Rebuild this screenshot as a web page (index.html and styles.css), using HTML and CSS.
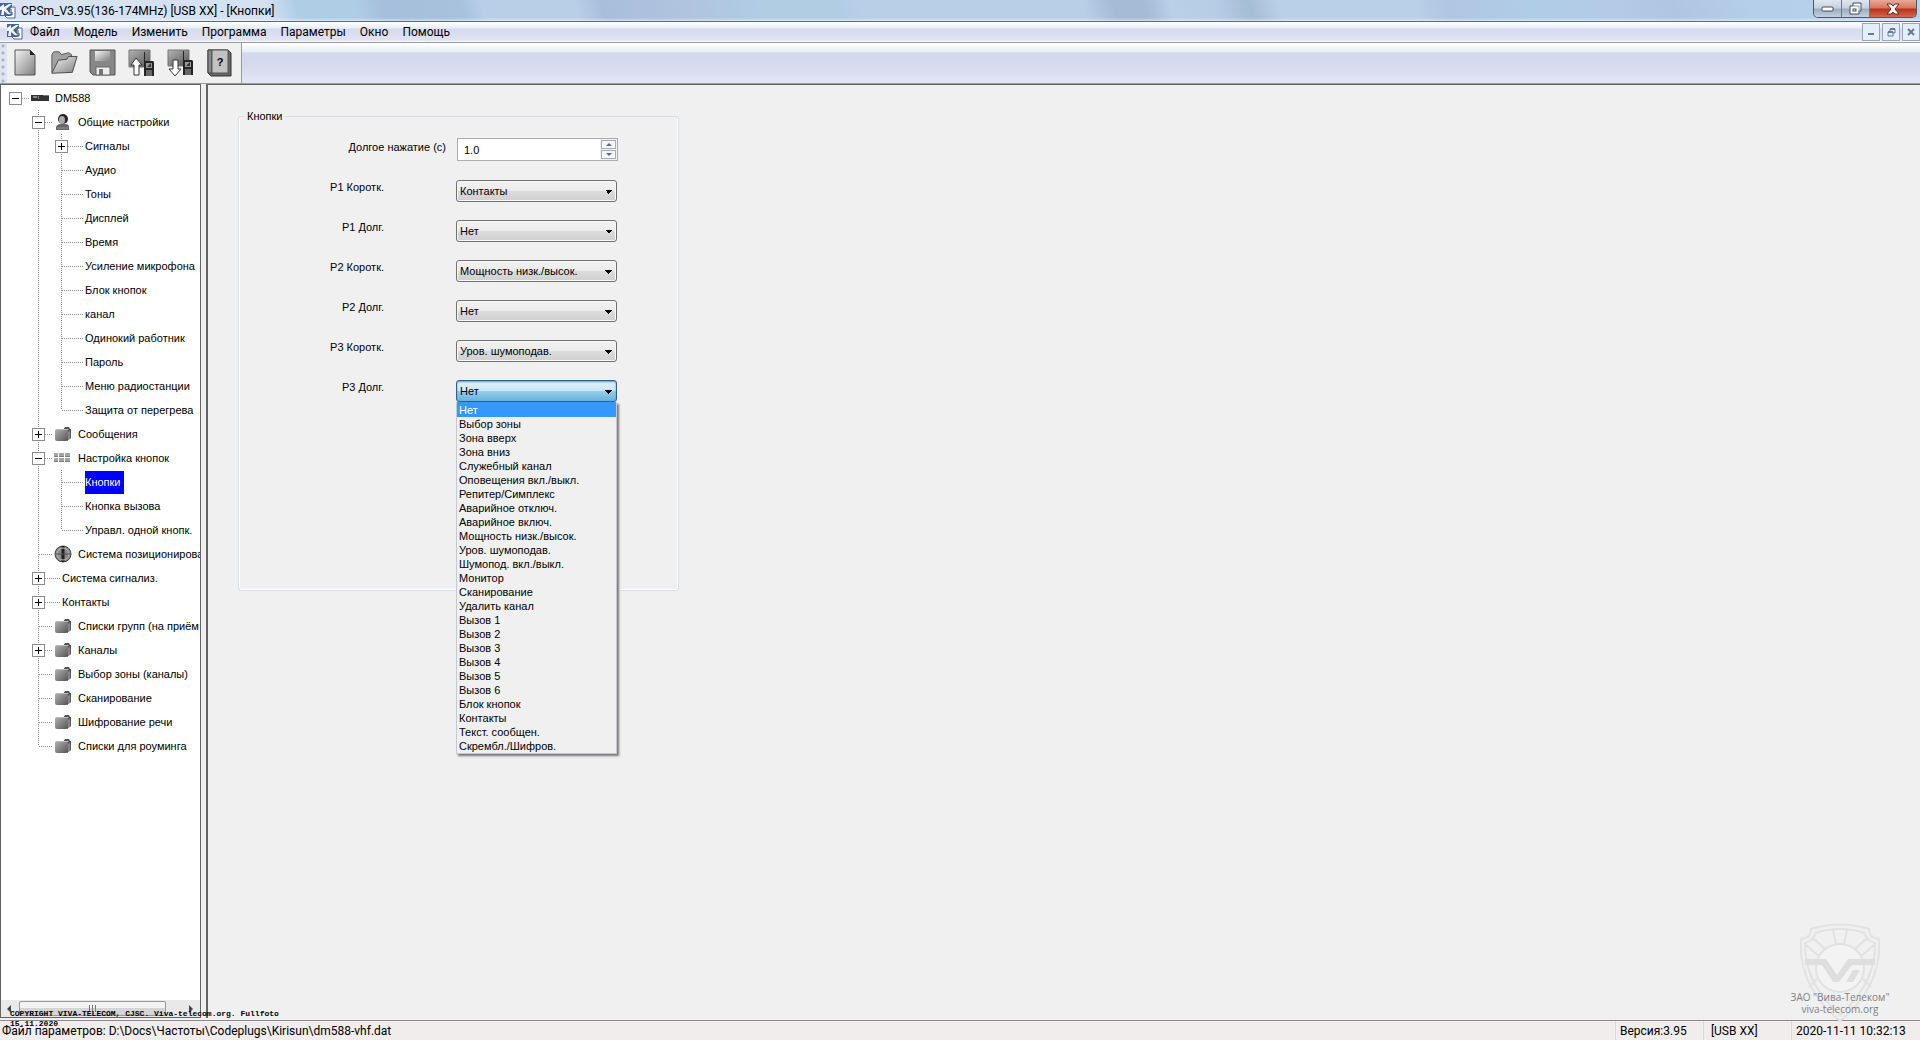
FILE: index.html
```html
<!DOCTYPE html>
<html lang="ru">
<head>
<meta charset="utf-8">
<title>CPSm_V3.95(136-174MHz) [USB XX] - [Кнопки]</title>
<link rel="stylesheet" href="styles.css">
</head>
<body>
<svg class="defs" aria-hidden="true">
  <defs>
    <linearGradient id="steel" x1="0" y1="0" x2="1" y2="1"><stop offset="0" stop-color="#f4f4f4"/><stop offset="1" stop-color="#808080"/></linearGradient>
    <linearGradient id="metal" x1="0" y1="0" x2="1" y2="1"><stop offset="0" stop-color="#b4b4b4"/><stop offset="1" stop-color="#555"/></linearGradient>
    <symbol id="logo" viewBox="0 0 16 16">
      <path d="M7 4h8v11H7l-2-2V6z" fill="#fff" stroke="#4767a8"/>
      <path d="M0 0h12v4l-3 4 3 3-2 2H0z" fill="#4a64a0"/>
      <path d="M0 4l4-3v3l5-3h3L6 6l5 5-2 1-5-4v4H1l1-5H0z" fill="#eef3fc"/>
      <path d="M12 7h-3v2h3v3H8" fill="none" stroke="#2b4685"/>
    </symbol>
    <symbol id="folder" viewBox="0 0 18 14">
      <path d="M9 3l2-3h4l1 2h1v9l-4 3V4z" fill="#555"/>
      <rect x="1" y="2" width="13" height="12" rx="2" fill="url(#metal)"/>
      <path d="M2 3h12l1-1H4z" fill="#bbb"/>
      <path d="M14 5l2-1v7l-2 2z" fill="#888"/>
    </symbol>
    <symbol id="radio" viewBox="0 0 10 25">
      <path d="M0 0h1v9h8l1 1v14H0z" fill="#242424"/>
      <path d="M2 11h6v5H2z" fill="#999"/><path d="M3 15l4-4v4z" fill="#333"/>
      <path d="M2 19h6M2 21h6M2 23h6" stroke="#aaa"/>
    </symbol>
  </defs>
</svg>

<header class="titlebar">
  <svg class="app-icon"><use href="#logo"/></svg>
  <h1 class="title">CPSm_V3.95(136-174MHz) [USB XX] - [Кнопки]</h1>
  <div class="window-buttons">
    <button class="win-button" aria-label="Свернуть"><svg width="14" height="8" viewBox="0 0 14 8"><rect x="1" y="2" width="11" height="4" rx="1" fill="#fff" stroke="#454d5a"/></svg></button>
    <button class="win-button" aria-label="Восстановить"><svg width="14" height="14" viewBox="0 0 14 14"><path d="M4 1h8v8h-2v3H1V4h3z" fill="#fff" stroke="#454d5a"/><path d="M4 4h6v6" fill="none" stroke="#8b96a5"/><rect x="4" y="7" width="3" height="2" fill="#fff" stroke="#454d5a"/></svg></button>
    <button class="win-button close" aria-label="Закрыть"><svg width="14" height="12" viewBox="0 0 14 12"><path d="M1 1h4l2 2 2-2h4L9 6l4 5H9L7 9l-2 2H1l4-5z" fill="#fff" stroke="#5a2a2a"/></svg></button>
  </div>
</header>

<nav class="menubar">
  <svg class="app-icon"><use href="#logo"/></svg>
  <button class="menu">Файл</button>
  <button class="menu">Модель</button>
  <button class="menu">Изменить</button>
  <button class="menu">Программа</button>
  <button class="menu">Параметры</button>
  <button class="menu">Окно</button>
  <button class="menu">Помощь</button>
  <div class="mdi-buttons">
    <button class="mdi" aria-label="Свернуть окно"><svg width="8" height="8"><path d="M1 6h6" stroke="#667a96" stroke-width="2"/></svg></button>
    <button class="mdi" aria-label="Восстановить окно"><svg width="9" height="9"><path d="M3 3V1h5v4H6M1 4h5v4H1z" fill="none" stroke="#667a96"/><path d="M3 1h5M1 4h5" stroke="#667a96" stroke-width="2"/></svg></button>
    <button class="mdi" aria-label="Закрыть окно"><svg width="8" height="8"><path d="M1 1l6 6M7 1L1 7" stroke="#667a96" stroke-width="2"/></svg></button>
  </div>
</nav>

<div class="toolbar">
  <div class="tools">
    <button class="tool" aria-label="Новый"><svg width="28" height="28" viewBox="0 0 28 28"><path d="M4 1h15l5 5v20H4z" fill="url(#steel)" stroke="#555"/><path d="M19 1l5 5h-5z" fill="#222"/></svg></button>
    <button class="tool" aria-label="Открыть"><svg width="28" height="28" viewBox="0 0 30 28"><path d="M2 24V5l2-3h6l2 3 8-2 3 2v8z" fill="#a2a2a2" stroke="#555"/><path d="M2 25l7-14 9-1 2-3h9l-5 17z" fill="url(#steel)" stroke="#444"/></svg></button>
    <button class="tool" aria-label="Сохранить"><svg width="28" height="28" viewBox="0 0 28 28"><path d="M1 1h25v25H4l-3-3z" fill="#878787" stroke="#555"/><path d="M6 2h15v10H6z" fill="url(#steel)"/><path d="M7 18h14v8H7z" fill="#eee" stroke="#666"/><path d="M10 20h4v6h-4z" fill="#777"/></svg></button>
    <button class="tool" aria-label="Читать"><svg width="28" height="28" viewBox="0 0 28 28"><path d="M1 1h21v17H1z" fill="url(#metal)" stroke="#777"/><use href="#radio" x="16" y="3" width="10" height="25"/><path d="M8 9l6 7h-3v10H6V16H3z" fill="#fff" stroke="#333"/></svg></button>
    <button class="tool" aria-label="Записать"><svg width="28" height="28" viewBox="0 0 28 28"><path d="M1 1h21v16H1z" fill="url(#metal)" stroke="#777"/><use href="#radio" x="16" y="2" width="10" height="25"/><path d="M6 11h5v9h3l-6 7-6-7h4z" fill="#fff" stroke="#333"/></svg></button>
    <button class="tool" aria-label="Справка"><svg width="28" height="28" viewBox="0 0 28 28"><path d="M2 1h20l3 3v23H5l-3-3z" fill="#666" stroke="#333"/><path d="M2 1h4v23H2z" fill="#888" stroke="#444"/><path d="M6 1h16v23H6z" fill="#c2c2c2" stroke="#555"/><text x="14" y="17" class="help-mark">?</text></svg></button>
  </div>
</div>

<div class="workspace">
  <aside class="tree-panel">
    <ul class="tree">
      <li>
        <div class="row"><button class="toggle minus" aria-label="Свернуть"></button><i class="stub"></i><svg class="icon" viewBox="0 0 18 14"><path d="M0 4h18v6H0z" fill="#333"/><path d="M2 5h4v2H2zM7 5h1v3H7z" fill="#888"/><path d="M12 4h6v1h-6z" fill="#777"/></svg><span>DM588</span></div>
        <ul class="branch">
          <li>
            <div class="row"><button class="toggle minus" aria-label="Свернуть"></button><i class="stub"></i><svg class="icon person" viewBox="0 0 18 18"><path d="M2 17v-3q1-3 5-3h4q4 0 4 3v3z" fill="#666"/><circle cx="9" cy="6" r="5" fill="#252525"/><ellipse cx="8" cy="7" rx="3" ry="4" fill="#aaa"/><path d="M3 15h11" stroke="#999"/></svg><span>Общие настройки</span></div>
            <ul class="branch">
              <li><div class="row"><button class="toggle plus" aria-label="Развернуть"></button><i class="stub long"></i><span>Сигналы</span></div></li>
              <li><div class="row leaf"><i class="stub long"></i><span>Аудио</span></div></li>
              <li><div class="row leaf"><i class="stub long"></i><span>Тоны</span></div></li>
              <li><div class="row leaf"><i class="stub long"></i><span>Дисплей</span></div></li>
              <li><div class="row leaf"><i class="stub long"></i><span>Время</span></div></li>
              <li><div class="row leaf"><i class="stub long"></i><span>Усиление микрофона</span></div></li>
              <li><div class="row leaf"><i class="stub long"></i><span>Блок кнопок</span></div></li>
              <li><div class="row leaf"><i class="stub long"></i><span>канал</span></div></li>
              <li><div class="row leaf"><i class="stub long"></i><span>Одинокий работник</span></div></li>
              <li><div class="row leaf"><i class="stub long"></i><span>Пароль</span></div></li>
              <li><div class="row leaf"><i class="stub long"></i><span>Меню радиостанции</span></div></li>
              <li><div class="row leaf"><i class="stub long"></i><span>Защита от перегрева</span></div></li>
            </ul>
          </li>
          <li><div class="row"><button class="toggle plus" aria-label="Развернуть"></button><i class="stub"></i><svg class="icon"><use href="#folder"/></svg><span>Сообщения</span></div></li>
          <li>
            <div class="row"><button class="toggle minus" aria-label="Свернуть"></button><i class="stub"></i><svg class="icon" viewBox="0 0 18 14"><path d="M0 2h4v4H0zM5 2h5v4H5zM11 2h5v4h-5zM0 7h4v4H0zM5 7h5v4H5zM11 7h5v4h-5z" fill="#a4a4a4"/><path d="M0 5.500h4M5 5.500h5M11 5.500h5M0 10.500h4M5 10.500h5M11 10.500h5" stroke="#7d7d7d"/></svg><span>Настройка кнопок</span></div>
            <ul class="branch">
              <li><div class="row leaf"><i class="stub long"></i><span class="selected">Кнопки</span></div></li>
              <li><div class="row leaf"><i class="stub long"></i><span>Кнопка вызова</span></div></li>
              <li><div class="row leaf"><i class="stub long"></i><span>Управл. одной кнопк.</span></div></li>
            </ul>
          </li>
          <li><div class="row leaf"><i class="stub"></i><svg class="icon globe" viewBox="0 0 18 18"><circle cx="9" cy="9" r="8" fill="#888" stroke="#444"/><path d="M9 1v16" stroke="#222" stroke-width="3"/><circle cx="9" cy="9" r="6" fill="none" stroke="#bbb"/><path d="M1 9h16" stroke="#555"/></svg><span>Система позиционирования</span></div></li>
          <li><div class="row"><button class="toggle plus" aria-label="Развернуть"></button><i class="stub long"></i><span>Система сигнализ.</span></div></li>
          <li><div class="row"><button class="toggle plus" aria-label="Развернуть"></button><i class="stub long"></i><span>Контакты</span></div></li>
          <li><div class="row leaf"><i class="stub"></i><svg class="icon"><use href="#folder"/></svg><span>Списки групп (на приём</span></div></li>
          <li><div class="row"><button class="toggle plus" aria-label="Развернуть"></button><i class="stub"></i><svg class="icon"><use href="#folder"/></svg><span>Каналы</span></div></li>
          <li><div class="row leaf"><i class="stub"></i><svg class="icon"><use href="#folder"/></svg><span>Выбор зоны (каналы)</span></div></li>
          <li><div class="row leaf"><i class="stub"></i><svg class="icon"><use href="#folder"/></svg><span>Сканирование</span></div></li>
          <li><div class="row leaf"><i class="stub"></i><svg class="icon"><use href="#folder"/></svg><span>Шифрование речи</span></div></li>
          <li><div class="row leaf"><i class="stub"></i><svg class="icon"><use href="#folder"/></svg><span>Списки для роуминга</span></div></li>
        </ul>
      </li>
    </ul>
    <div class="scrollbar">
      <svg width="4" height="8"><path d="M4 0v8L0 4z" fill="#444"/></svg>
      <div class="thumb"></div>
      <svg width="4" height="8"><path d="M0 0v8l4-4z" fill="#444"/></svg>
    </div>
  </aside>

  <main class="content">
    <fieldset class="group">
      <legend>Кнопки</legend>
      <div class="field number">
        <label for="hold">Долгое нажатие (с)</label>
        <div class="spinner">
          <input id="hold" type="text" value="1.0">
          <div class="steps">
            <button aria-label="Больше"><svg width="6" height="3"><path d="M0 3l3-3 3 3z" fill="#5c6496"/></svg></button>
            <button aria-label="Меньше"><svg width="6" height="3"><path d="M0 0l3 3 3-3z" fill="#5c6496"/></svg></button>
          </div>
        </div>
      </div>
      <div class="field"><label for="p1s">P1 Коротк.</label><div class="combo"><select id="p1s"><option>Контакты</option></select></div></div>
      <div class="field"><label for="p1l">P1 Долг.</label><div class="combo"><select id="p1l"><option>Нет</option></select></div></div>
      <div class="field"><label for="p2s">P2 Коротк.</label><div class="combo"><select id="p2s"><option>Мощность низк./высок.</option></select></div></div>
      <div class="field"><label for="p2l">P2 Долг.</label><div class="combo"><select id="p2l"><option>Нет</option></select></div></div>
      <div class="field"><label for="p3s">P3 Коротк.</label><div class="combo"><select id="p3s"><option>Уров. шумоподав.</option></select></div></div>
      <div class="field"><label for="p3l">P3 Долг.</label>
        <div class="combo open"><select id="p3l"><option>Нет</option></select>
          <ul class="options" role="listbox" aria-label="P3 Долг.">
            <li role="option" aria-selected="true">Нет</li>
            <li role="option">Выбор зоны</li>
            <li role="option">Зона вверх</li>
            <li role="option">Зона вниз</li>
            <li role="option">Служебный канал</li>
            <li role="option">Оповещения вкл./выкл.</li>
            <li role="option">Репитер/Симплекс</li>
            <li role="option">Аварийное отключ.</li>
            <li role="option">Аварийное включ.</li>
            <li role="option">Мощность низк./высок.</li>
            <li role="option">Уров. шумоподав.</li>
            <li role="option">Шумопод. вкл./выкл.</li>
            <li role="option">Монитор</li>
            <li role="option">Сканирование</li>
            <li role="option">Удалить канал</li>
            <li role="option">Вызов 1</li>
            <li role="option">Вызов 2</li>
            <li role="option">Вызов 3</li>
            <li role="option">Вызов 4</li>
            <li role="option">Вызов 5</li>
            <li role="option">Вызов 6</li>
            <li role="option">Блок кнопок</li>
            <li role="option">Контакты</li>
            <li role="option">Текст. сообщен.</li>
            <li role="option">Скрембл./Шифров.</li>
          </ul>
        </div>
      </div>
    </fieldset>
  </main>
</div>

<footer class="statusbar">
  <span class="file">Файл параметров: D:\Docs\Частоты\Codeplugs\Kirisun\dm588-vhf.dat</span>
  <span class="cell version">Версия:3.95</span>
  <span class="cell port">[USB XX]</span>
  <span class="cell clock">2020-11-11 10:32:13</span>
</footer>

<p class="copyright">COPYRIGHT VIVA-TELECOM, CJSC. Viva-telecom.org. Fullfoto<br>15.11.2020</p>
<div class="watermark">
  <svg width="82" height="100" viewBox="0 0 82 100" fill="none" stroke="#e2e2e2" stroke-width="2">
    <path d="M12 6Q41-3 70 6q0 9 10 10Q83 64 41 98-1 64 2 16 12 15 12 6z"/>
    <path d="M16 10q25-8 50 0 1 8 10 10 1 40-35 72Q5 60 6 20q9-2 10-10z"/>
    <circle cx="41" cy="45" r="24" fill="#f3f3f3"/>
    <path d="M34 7l3 14h8l3-14M14 15l13 12M68 15L55 27M7 22l14 12M75 22L61 34M18 56l-8 8M64 56l8 8"/>
    <path d="M6 36h21l11 16 11-16h27v6H53L40 59h-6L23 42H6zM54 47h7l-7 12h-7z" fill="#dedede" stroke="none"/>
  </svg>
  <span>ЗАО "Вива-Телеком"</span>
  <span>viva-telecom.org</span>
</div>
</body>
</html>
```
FILE: styles.css
```css
* { box-sizing: border-box; }

body {
  margin: 0;
  height: 100vh;
  display: flex;
  flex-direction: column;
  overflow: hidden;
  background: #f0f0f0;
  color: #000;
  font: 11px/14px "Liberation Sans", Arial, sans-serif;
}

button, input, select { font: inherit; color: inherit; margin: 0; padding: 0; }
button { display: flex; align-items: center; justify-content: center; border: 0; background: none; }
ul { list-style: none; margin: 0; padding: 0; }
svg { flex: none; display: block; }
.defs { position: absolute; width: 0; height: 0; }
.app-icon { width: 16px; height: 16px; }

/* Window frame */
.titlebar {
  flex: none;
  display: flex;
  align-items: flex-start;
  height: 22px;
  padding-right: 3px;
  border-bottom: 1px solid #5c6b80;
  background:
    linear-gradient(to bottom, transparent 18px, rgba(255, 255, 255, .5)),
    linear-gradient(75deg, #d8e4f2 0, #d3e1f1 260px, #b0cde6 290px, #b0cde6 345px, #a5bedb 375px, #a8c2de 450px, #b9cfe8 470px, #b9cfe8 560px, #a9bedb 585px, #b0c4df 670px, #b0cde4 740px, #b0cde4 810px, #b9cfe8 840px, #b9cfe8 1050px, #a6bcd6 1080px, #a6bcd6 1110px, #bad0e8 1135px, #b6cce4 1180px, #a5bcd5 1210px, #bad0e8 1240px, #bad0e8 1370px, #b0c6e2 1400px, #b0cde6 1490px, #b4cbe8 1560px, #afc6e3 1620px, #b5cee9 1700px, #b8d2ed 100%);
}
.titlebar .app-icon { margin-top: 3px; }
.title {
  flex: 1;
  margin: 0;
  padding-left: 5px;
  font: 12px/22px Roboto, "Noto Sans", sans-serif;
}
.window-buttons {
  display: flex;
  height: 18px;
  border: 1px solid #4d5968;
  border-top: 0;
  border-radius: 0 0 5px 5px;
  overflow: hidden;
}
.win-button {
  width: 28px;
  border-right: 1px solid #6b7889;
  background: linear-gradient(#dfe6ee 0, #c6d2df 8px, #9cacbf 9px, #c3d0df 100%);
}
.win-button.close {
  width: 46px;
  border-right: 0;
  background: linear-gradient(#e9a99a 0, #d9765f 8px, #b8301a 9px, #d8654c 100%);
}

.menubar {
  flex: none;
  display: flex;
  align-items: center;
  height: 21px;
  padding-left: 7px;
  border-bottom: 1px solid #9b9ca6;
  background: linear-gradient(#fff 0, #e9edf7 6px, #d6daee 7px, #dfe3f3 18px, #fff 20px);
}
.menu {
  padding: 0 7px;
  font: 12px/20px Roboto, "Noto Sans", sans-serif;
}
.mdi-buttons { display: flex; gap: 2px; margin-left: auto; }
.mdi { width: 18px; height: 18px; border: 1px solid #9aa7bb; background: #e3eefa; }

.toolbar {
  flex: none;
  display: flex;
  height: 41px;
  border-bottom: 1px solid #9a9a9e;
  background: linear-gradient(#fff 0, #e8edf6 9px, #d3d8ec 10px, #d6daee 24px, #e3e7f6 100%);
}
.tools {
  display: flex;
  align-items: center;
  gap: 11px;
  width: 242px;
  padding-left: 11px;
  border-right: 1px solid #9a9a9a;
  background: radial-gradient(circle at 3px 3px, #a9b3cc 1px, transparent 2px) 0 0 / 7px 7px repeat-y, linear-gradient(to right, #dfe4f3 7px, #f0f0f0 7px);
}
.help-mark { font: bold 11px "Liberation Sans", sans-serif; text-anchor: middle; }

/* Tree */
.workspace { flex: 1; display: flex; gap: 5px; min-height: 0; }
.tree-panel {
  flex: none;
  display: flex;
  flex-direction: column;
  width: 201px;
  margin: 0 0 2px;
  border: 1px solid #646464;
  background: #fff;
  overflow: hidden;
}
.tree { flex: 1; padding: 1px 0 0 8px; overflow: hidden; }
.branch { margin-left: 23px; }
.branch > li {
  background: repeating-linear-gradient(#8c8c8c 0 1px, #fff 1px 2px) 6px 0 / 1px 100% no-repeat;
}
.branch > li:last-child { background-size: 1px 12px; }
.row { display: flex; align-items: center; height: 24px; white-space: nowrap; }
.row.leaf { padding-left: 7px; }
.row.leaf .stub { width: 14px; }
.row.leaf .stub.long { width: 22px; }
.toggle {
  flex: none;
  width: 13px;
  height: 13px;
  border: 1px solid #8c8c8c;
  background: linear-gradient(#000, #000) center / 7px 1px no-repeat #fff;
}
.toggle.plus {
  background: linear-gradient(#000, #000) center / 7px 1px no-repeat, linear-gradient(#000, #000) center / 1px 7px no-repeat #fff;
}
.stub {
  flex: none;
  width: 8px;
  height: 1px;
  margin-right: 1px;
  background: repeating-linear-gradient(to right, #8c8c8c 0 1px, #fff 1px 2px);
}
.stub.long { width: 16px; }
.icon { width: 18px; height: 14px; margin-right: 6px; }
.icon.person, .icon.globe { height: 18px; }
.selected { padding-right: 3px; background: #00f; color: #fff; line-height: 23px; }
.scrollbar {
  flex: none;
  display: flex;
  align-items: center;
  justify-content: space-between;
  height: 17px;
  padding: 0 7px 0 6px;
  background: #e9e9e9;
}
.thumb {
  width: 147px;
  height: 15px;
  margin: 0 auto 0 8px;
  border: 1px solid #979797;
  border-radius: 2px;
  background: repeating-linear-gradient(to right, #777 0 1px, transparent 1px 3px) center / 7px 7px no-repeat, linear-gradient(#f3f3f3 50%, #d5d5d5 50%);
}

/* Form */
.content {
  flex: 1;
  border-left: 2px solid #646464;
  border-top: 1px solid #646464;
  padding: 24px 30px;
  margin-bottom: 2px;
}
.group {
  width: 441px;
  height: 482px;
  margin: 0;
  padding: 15px 0 0 12px;
  border: 1px solid #d5dfe5;
  border-radius: 3px;
  box-shadow: inset -1px -1px #fff, inset 1px 0 #fff;
}
.group legend { margin-left: -6px; padding: 0 2px; }
.field { display: grid; grid-template-columns: 133px 161px; column-gap: 72px; height: 40px; align-items: start; }
.field label { text-align: right; white-space: nowrap; }
.field.number { grid-template-columns: 195px 161px; column-gap: 11px; height: 42px; }
.field.number label { padding-top: 2px; }
.spinner { display: flex; height: 23px; border: 1px solid #abadb3; background: #fff; }
.spinner input { flex: 1; min-width: 0; padding-left: 6px; border: 0; background: none; }
.steps { display: flex; flex-direction: column; gap: 1px; width: 17px; padding: 1px; background: #f0f0f0; }
.steps button { flex: 1; border: 1px solid #a9abb4; background: #f4f4fa; }
.combo { position: relative; }
.combo select {
  display: block;
  width: 100%;
  height: 22px;
  padding: 0 3px;
  border: 1px solid #707070;
  border-radius: 3px;
  appearance: none;
  box-shadow: inset 0 0 0 1px #fafafa;
  background:
    linear-gradient(to bottom left, #000 50%, transparent 50%) 148px 9px / 4px 4px no-repeat,
    linear-gradient(to bottom right, #000 50%, transparent 50%) 152px 9px / 4px 4px no-repeat,
    linear-gradient(#f2f2f2 0, #ebebeb 50%, #dcdcdc 50%, #cfcfcf 100%);
}
.combo.open select {
  border-color: #2c628b;
  box-shadow: inset 0 1px 2px #6d93ad;
  background:
    linear-gradient(to bottom left, #000 50%, transparent 50%) 148px 9px / 4px 4px no-repeat,
    linear-gradient(to bottom right, #000 50%, transparent 50%) 152px 9px / 4px 4px no-repeat,
    linear-gradient(#e3f3fb 0, #c6e6f7 50%, #98cfee 50%, #68b1dc 100%);
}
.options {
  position: absolute;
  top: 22px;
  left: 0;
  width: 161px;
  border: 1px solid #c4c9d2;
  border-top: 0;
  background: #f0f0f0;
  box-shadow: 2px 2px 2px #777;
}
.options li { padding-left: 2px; line-height: 14px; white-space: nowrap; }
.options [aria-selected] { padding-top: 1px; background: #3399ff; color: #fff; }

/* Status */
.statusbar {
  flex: none;
  display: flex;
  height: 20px;
  border-top: 1px solid #8c8c8c;
  background: #f1edec;
  font: 12px/20px Roboto, "Noto Sans", sans-serif;
  white-space: nowrap;
}
.file { flex: 1; padding-left: 2px; }
.cell { border-left: 1px solid #dcd8d7; padding-left: 4px; }
.version { width: 88px; }
.port { width: 88px; padding-left: 7px; }
.clock { width: 129px; }

/* Photo overlays */
.copyright {
  position: absolute;
  left: 10px;
  bottom: 11px;
  margin: 0;
  font: bold 8px/10px "Liberation Mono", monospace;
}
.watermark {
  position: absolute;
  right: 20px;
  bottom: 25px;
  display: flex;
  flex-direction: column;
  align-items: center;
  width: 120px;
  color: #808080;
  font: 10px/12px "Open Sans", sans-serif;
}
.watermark svg { margin-bottom: -32px; }
```
